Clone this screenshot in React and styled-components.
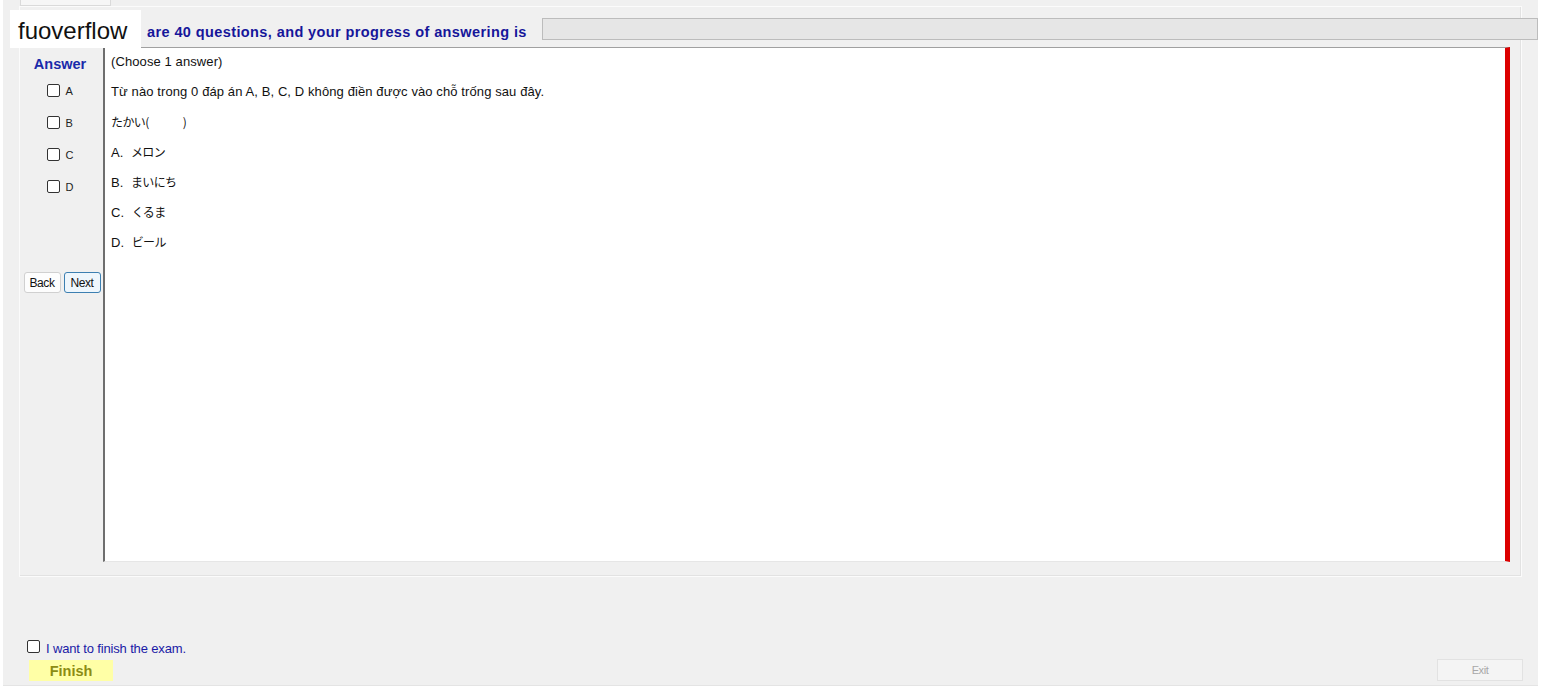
import React from 'react';
import styled, { createGlobalStyle } from 'styled-components';

const GlobalStyle = createGlobalStyle`
  html, body {
    margin: 0;
    padding: 0;
    background: #ffffff;
  }
  * {
    box-sizing: border-box;
  }
`;

const options = [
  { key: 'A', text: 'メロン' },
  { key: 'B', text: 'まいにち' },
  { key: 'C', text: 'くるま' },
  { key: 'D', text: 'ビール' },
];

const App = () => {
  return (
    <Page>
      <GlobalStyle />
      <Window>
        <TabStrip>
          <Tab />
        </TabStrip>
        <Panel>
          <Header>
            <HeaderText>are 40 questions, and your progress of answering is</HeaderText>
            <Progress />
          </Header>
          <Body>
            <AnswerColumn>
              <AnswerTitle>Answer</AnswerTitle>
              {options.map((o) => (
                <CheckRow key={o.key}>
                  <Box />
                  <CheckLabel>{o.key}</CheckLabel>
                </CheckRow>
              ))}
              <NavRow>
                <NavButton>Back</NavButton>
                <NavButton $focused>Next</NavButton>
              </NavRow>
            </AnswerColumn>
            <Question>
              <Line>(Choose 1 answer)</Line>
              <Line>Từ nào trong 0 đáp án A, B, C, D không điền được vào chỗ trống sau đây.</Line>
              <Line>
                <Jp>たかい(　　　)</Jp>
              </Line>
              {options.map((o) => (
                <Line key={o.key}>
                  {o.key}.&nbsp; <Jp>{o.text}</Jp>
                </Line>
              ))}
            </Question>
          </Body>
        </Panel>
        <Footer>
          <FinishRow>
            <Box />
            <FinishLabel>I want to finish the exam.</FinishLabel>
          </FinishRow>
          <ButtonRow>
            <FinishButton>Finish</FinishButton>
            <ExitButton>Exit</ExitButton>
          </ButtonRow>
        </Footer>
      </Window>
      <Watermark>fuoverflow</Watermark>
    </Page>
  );
};
export default App;

const Page = styled.div`
  position: relative;
  width: 1542px;
  height: 690px;
  background: #ffffff;
  overflow: hidden;
  font-family: 'Liberation Sans', Arial, sans-serif;
`;

const Window = styled.div`
  margin-left: 3px;
  width: 1535px;
  height: 686px;
  background: #f0f0f0;
  border-bottom: 1px solid #e4e4e4;
  display: flex;
  flex-direction: column;
`;

const TabStrip = styled.div`
  height: 6px;
  padding-left: 17px;
  display: flex;
`;

const Tab = styled.div`
  width: 91px;
  height: 6px;
  background: #f6f6f6;
  border: 1px solid #dadada;
  border-top: none;
`;

const Panel = styled.div`
  margin-left: 16px;
  width: 1503px;
  height: 571px;
  border: 1px solid #fbfbfb;
  box-shadow: inset -1px -1px 0 #e2e2e2;
  display: flex;
  flex-direction: column;
`;

const Header = styled.div`
  height: 40px;
  display: flex;
  align-items: flex-start;
  padding-left: 127px;
  width: 1520px;
`;

const HeaderText = styled.div`
  margin-top: 17px;
  font-size: 14.5px;
  font-weight: 700;
  color: #16169a;
  letter-spacing: 0.4px;
  white-space: nowrap;
`;

const Progress = styled.div`
  margin-left: 15px;
  margin-top: 11px;
  width: 996px;
  height: 22px;
  background: #e6e6e6;
  border: 1px solid #bcbcbc;
`;

const Body = styled.div`
  display: flex;
  padding-left: 3px;
`;

const AnswerColumn = styled.div`
  width: 80px;
  height: 515px;
  display: flex;
  flex-direction: column;
  align-items: center;
`;

const AnswerTitle = styled.div`
  margin-top: 9px;
  margin-left: -6px;
  height: 16px;
  font-size: 14.5px;
  font-weight: 700;
  color: #1a2aaa;
`;

const CheckRow = styled.div`
  margin-top: 8px;
  height: 21px;
  display: flex;
  align-items: center;
  gap: 6px;
  margin-left: -2px;
  & + & {
    margin-top: 11px;
  }
`;

const Box = styled.span`
  display: inline-block;
  width: 13px;
  height: 13px;
  border: 1px solid #333333;
  border-radius: 2px;
  background: #ffffff;
`;

const CheckLabel = styled.span`
  font-size: 11px;
  color: #222222;
  width: 12px;
`;

const NavRow = styled.div`
  margin-top: 75px;
  display: flex;
  gap: 3px;
  margin-left: -2px;
`;

const NavButton = styled.div`
  width: 37px;
  height: 21px;
  display: flex;
  align-items: center;
  justify-content: center;
  font-size: 12px;
  color: #111111;
  background: ${(p) => (p.$focused ? '#eef6fc' : '#fdfdfd')};
  border: 1px solid ${(p) => (p.$focused ? '#3c7fb1' : '#d0d0d0')};
  border-radius: 3px;
  letter-spacing: -0.4px;
`;

const Question = styled.div`
  width: 1407px;
  height: 515px;
  background: #ffffff;
  border-top: 1px solid #a0a0a0;
  border-left: 2px solid #6e6e6e;
  border-bottom: 1px solid #e6e6e6;
  border-right: 5px solid #dc0000;
  padding: 6px 0 0 6px;
  display: flex;
  flex-direction: column;
  gap: 11px;
`;

const Line = styled.div`
  height: 19px;
  line-height: 16px;
  font-size: 13px;
  color: #111111;
  letter-spacing: 0.1px;
  font-family: 'Liberation Sans', 'Noto Sans CJK JP', sans-serif;
  white-space: pre;
`;

const Jp = styled.span`
  font-family: 'Noto Sans CJK JP', sans-serif;
  font-size: 12px;
  letter-spacing: -0.6px;
`;

const Footer = styled.div`
  flex: 1;
  display: flex;
  flex-direction: column;
  justify-content: flex-end;
  padding: 0 15px 4px 24px;
`;

const FinishRow = styled.div`
  display: flex;
  align-items: center;
  gap: 6px;
  height: 14px;
  margin-bottom: 6px;
`;

const FinishLabel = styled.span`
  font-size: 13px;
  color: #1a1aa6;
  letter-spacing: -0.15px;
  margin-top: 4px;
`;

const ButtonRow = styled.div`
  display: flex;
  justify-content: space-between;
  align-items: flex-end;
`;

const FinishButton = styled.div`
  margin-left: 2px;
  width: 84px;
  height: 21px;
  background: #ffffa6;
  display: flex;
  align-items: center;
  justify-content: center;
  font-size: 14.5px;
  font-weight: 700;
  color: #8c8c14;
`;

const ExitButton = styled.div`
  width: 86px;
  height: 22px;
  background: #f4f4f4;
  border: 1px solid #e2e2e2;
  display: flex;
  align-items: center;
  justify-content: center;
  font-size: 11px;
  color: #a8a8a8;
  letter-spacing: -0.4px;
`;

const Watermark = styled.div`
  position: absolute;
  left: 10px;
  top: 10px;
  width: 131px;
  height: 38px;
  background: #ffffff;
  display: flex;
  align-items: center;
  padding-left: 8px;
  padding-top: 4px;
  font-size: 24px;
  color: #111111;
`;
